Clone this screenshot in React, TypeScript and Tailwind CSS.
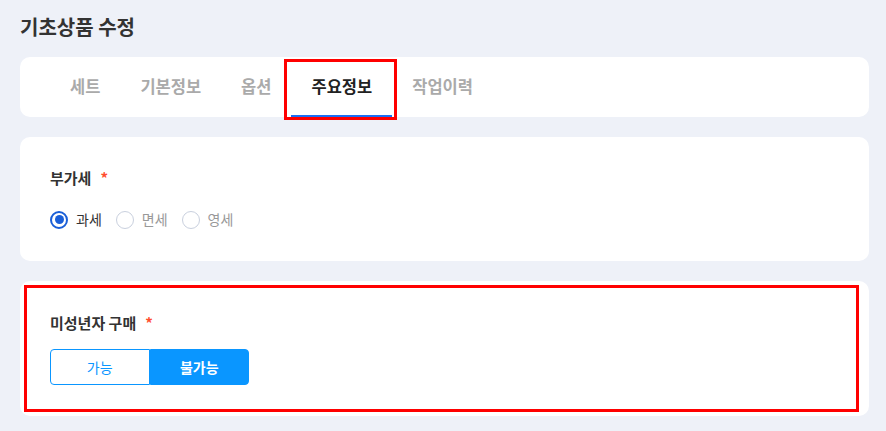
import React from "react";

const font = { fontFamily: '"Noto Sans CJK KR", "Noto Sans", sans-serif' };

function Radio({ label, checked }: { label: string; checked?: boolean }) {
  return (
    <label className="flex items-center gap-[8px]">
      <span
        className={
          checked
            ? "flex h-[18px] w-[18px] items-center justify-center rounded-full border-[2px] border-[#1a5fd8] bg-white"
            : "h-[18px] w-[18px] rounded-full border border-[#c9d0de] bg-white"
        }
      >
        {checked && <span className="h-[9px] w-[9px] rounded-full bg-[#1a5fd8]" />}
      </span>
      <span className={checked ? "text-[14px] text-[#333]" : "text-[14px] text-[#999]"}>{label}</span>
    </label>
  );
}

export default function App() {
  const tabs = ["세트", "기본정보", "옵션", "주요정보", "작업이력"];
  return (
    <div className="min-h-[431px] w-[886px] bg-[#eef1f8] pl-5 pr-[17px] pt-[13px]" style={font}>
      <h1 className="mb-[16px] h-[28px] text-[20px] font-bold leading-[28px] text-[#333]">기초상품 수정</h1>

      <div className="flex h-[60px] rounded-[10px] bg-white pl-[30px]">
        {tabs.map((t) => {
          const active = t === "주요정보";
          return (
            <div
              key={t}
              className={
                active
                  ? "relative flex h-full items-center border-b-2 border-[#1a6ef5] px-5 text-[16.5px] font-semibold text-[#222]"
                  : "flex h-full items-center border-b-2 border-transparent px-5 text-[16.5px] font-semibold text-[#aaa]"
              }
            >
              {t}
              {active && (
                <div className="pointer-events-none absolute -bottom-[5px] -left-[7px] -right-[5px] top-[2px] border-[3px] border-[#ff0000]" />
              )}
            </div>
          );
        })}
      </div>

      <div className="mt-5 h-[124px] rounded-[10px] bg-white px-[30px] pt-[30px]">
        <div className="flex items-center text-[15px] font-semibold leading-[22px] text-[#333]">
          부가세<span className="ml-[9px] text-[#ff4d2e]">*</span>
        </div>
        <div className="mt-[20px] flex items-center gap-[14px]">
          <Radio label="과세" checked />
          <Radio label="면세" />
          <Radio label="영세" />
        </div>
      </div>

      <div className="relative mt-5 h-[135px] rounded-[10px] bg-white px-[30px] pt-[31px]">
        <div className="flex items-center text-[15px] font-semibold leading-[22px] text-[#333]">
          미성년자 구매<span className="ml-[9px] text-[#ff4d2e]">*</span>
        </div>
        <div className="mt-[15px] flex h-[36px] w-[199px]">
          <button className="flex-1 rounded-l-[4px] border border-[#0a96ff] bg-white text-[14px] text-[#0a96ff]">
            가능
          </button>
          <button className="flex-1 rounded-r-[4px] border border-[#0a96ff] bg-[#0a96ff] text-[14px] font-bold text-white">
            불가능
          </button>
        </div>
        <div className="pointer-events-none absolute bottom-[4px] left-[4px] right-[10px] top-[4px] border-[3px] border-[#ff0000]" />
      </div>
    </div>
  );
}
